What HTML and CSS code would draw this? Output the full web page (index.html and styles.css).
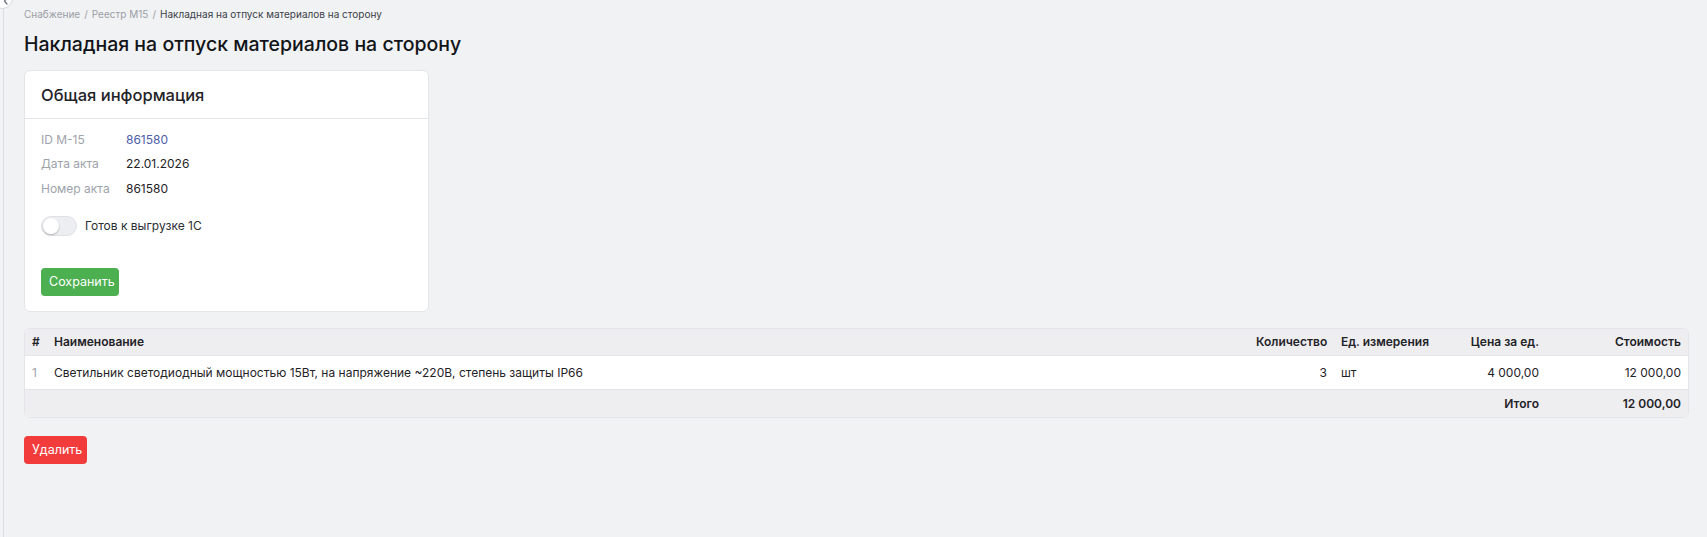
FILE: index.html
```html
<!DOCTYPE html>
<html lang="ru">
<head>
<meta charset="utf-8">
<title>Накладная на отпуск материалов на сторону</title>
<link rel="stylesheet" href="styles.css">
</head>
<body>
<div class="app">
  <aside class="sidebar"></aside>
  <button class="collapse" aria-label="Свернуть">
    <svg width="8" height="8" viewBox="0 0 8 8"><path d="M5 1 L2.5 4 L5 7" fill="none" stroke="#6b7280" stroke-width="1.2" stroke-linecap="round" stroke-linejoin="round"/></svg>
  </button>
  <main class="main">
    <nav class="breadcrumb">
      <span class="crumb">Снабжение</span>
      <span class="sep">/</span>
      <span class="crumb">Реестр М15</span>
      <span class="sep">/</span>
      <span class="crumb current">Накладная на отпуск материалов на сторону</span>
    </nav>
    <h1 class="page-title">Накладная на отпуск материалов на сторону</h1>

    <section class="card">
      <header class="card-header">Общая информация</header>
      <div class="card-body">
        <dl class="info">
          <dt>ID M-15</dt><dd><a class="link" href="#">861580</a></dd>
          <dt>Дата акта</dt><dd>22.01.2026</dd>
          <dt>Номер акта</dt><dd>861580</dd>
        </dl>
        <label class="toggle-row">
          <span class="toggle"><span class="knob"></span></span>
          <span class="toggle-label">Готов к выгрузке 1С</span>
        </label>
        <button class="btn btn-green">Сохранить</button>
      </div>
    </section>

    <div class="table-wrap">
      <table class="items">
        <colgroup>
          <col class="c-num"><col><col class="c-qty"><col class="c-unit"><col class="c-price"><col class="c-total">
        </colgroup>
        <thead>
          <tr>
            <th>#</th>
            <th>Наименование</th>
            <th class="r">Количество</th>
            <th>Ед. измерения</th>
            <th class="r">Цена за ед.</th>
            <th class="r">Стоимость</th>
          </tr>
        </thead>
        <tbody>
          <tr>
            <td class="idx">1</td>
            <td>Светильник светодиодный мощностью 15Вт, на напряжение ~220В, степень защиты IP66</td>
            <td class="r">3</td>
            <td>шт</td>
            <td class="r">4&nbsp;000,00</td>
            <td class="r">12&nbsp;000,00</td>
          </tr>
        </tbody>
        <tfoot>
          <tr>
            <td></td><td></td><td></td><td></td>
            <td class="r">Итого</td>
            <td class="r">12&nbsp;000,00</td>
          </tr>
        </tfoot>
      </table>
    </div>

    <button class="btn btn-red">Удалить</button>
  </main>
</div>
</body>
</html>
```

FILE: styles.css
```css
* { box-sizing: border-box; }
html, body { margin: 0; height: 100%; }
body {
  background: #f1f2f4;
  font-family: Inter, "Noto Sans", sans-serif;
  color: #1f2328;
}
.app {
  display: flex;
  min-height: 100vh;
  position: relative;
  overflow: hidden;
}
.sidebar {
  width: 4px;
  flex: none;
  border-right: 1px solid #dcdde1;
  background: #f1f2f4;
}
.collapse {
  position: absolute;
  left: -9px;
  top: -13px;
  width: 22px;
  height: 22px;
  border-radius: 50%;
  border: 1px solid #d6d8dd;
  background: #ffffff;
  padding: 0 0 3px 8px;
  display: flex;
  align-items: flex-end;
  justify-content: center;
}
.main {
  flex: 1;
  padding: 0 18px 0 20px;
}
.breadcrumb {
  padding-top: 7px;
  font-size: 10px;
  line-height: 14px;
  color: #9a9ea6;
  display: flex;
  gap: 4px;
}
.breadcrumb .current { color: #3a3f47; }
.page-title {
  margin: 9px 0 0;
  font-size: 19.5px;
  line-height: 28px;
  font-weight: 500;
  color: #111418;
}
.card {
  margin-top: 12px;
  width: 405px;
  background: #ffffff;
  border: 1px solid #e4e5e9;
  border-radius: 6px;
}
.card-header {
  height: 48px;
  display: flex;
  align-items: center;
  padding: 0 16px;
  border-bottom: 1px solid #e4e5e9;
  font-size: 16.5px;
  font-weight: 500;
  color: #1f2328;
}
.card-body {
  padding: 8px 16px 15px;
}
.info {
  margin: 0;
  display: grid;
  grid-template-columns: 85px 1fr;
  grid-auto-rows: 24.5px;
  align-items: center;
  font-size: 12px;
}
.info dt { color: #9ea3ab; }
.info dd { margin: 0; color: #1f2328; }
.link { color: #4d5ea8; text-decoration: none; }
.toggle-row {
  margin-top: 15px;
  display: flex;
  align-items: center;
  gap: 8px;
  font-size: 12px;
  color: #2a2e34;
}
.toggle {
  width: 36px;
  height: 20px;
  border-radius: 10px;
  background: #eceef1;
  border: 1px solid #dfe1e5;
  position: relative;
  display: inline-block;
}
.knob {
  position: absolute;
  left: 1px;
  top: 1px;
  width: 16px;
  height: 16px;
  border-radius: 50%;
  background: #ffffff;
  box-shadow: 0 1px 2px rgba(0,0,0,0.25);
}
.btn {
  display: block;
  border: none;
  border-radius: 4px;
  height: 28px;
  padding: 0 8px;
  font-family: Inter, "Noto Sans", sans-serif;
  font-size: 12.5px;
  color: #ffffff;
  cursor: pointer;
}
.btn-green {
  margin-top: 32px;
  background: #4caf50;
  width: 78px;
}
.btn-red {
  margin-top: 18px;
  background: #f23c3c;
  width: 63px;
}
.table-wrap {
  margin-top: 16px;
  border: 1px solid #e4e5e9;
  border-radius: 6px;
  overflow: hidden;
  background: #ffffff;
}
.items {
  width: 100%;
  border-collapse: collapse;
  table-layout: fixed;
  font-size: 12px;
}
.c-num { width: 22px; }
.c-qty { width: 85px; }
.c-unit { width: 102px; }
.c-price { width: 110px; }
.c-total { width: 142px; }
.items th, .items td {
  padding: 0 7px;
  text-align: left;
  white-space: nowrap;
}
.items .r { text-align: right; }
.items thead tr {
  height: 27px;
  background: #eeeef1;
  border-bottom: 1px solid #e4e5e9;
}
.items th {
  font-weight: 600;
  color: #1f2328;
}
.items tbody tr {
  height: 34px;
  background: #ffffff;
  color: #1f2328;
}
.items .idx { color: #9ea3ab; }
.items tfoot tr {
  height: 27px;
  background: #eeeef1;
  border-top: 1px solid #e4e5e9;
}
.items tfoot td {
  font-weight: 600;
  color: #1f2328;
}
```
